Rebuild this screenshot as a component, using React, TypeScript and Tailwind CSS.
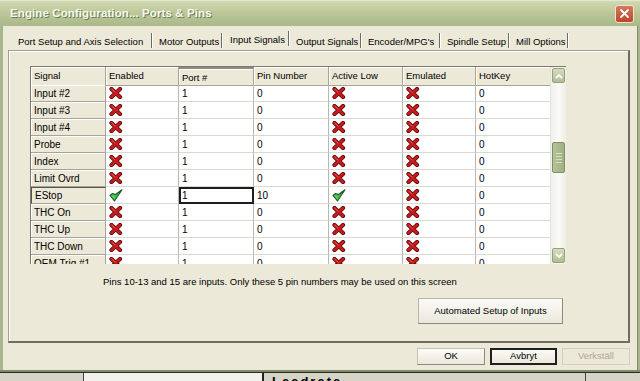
import React from "react";

type Mark = "x" | "c";
type Row = [string, Mark, string, string, Mark, Mark, string];

const ROWS: Row[] = [
  ["Input #2", "x", "1", "0", "x", "x", "0"],
  ["Input #3", "x", "1", "0", "x", "x", "0"],
  ["Input #4", "x", "1", "0", "x", "x", "0"],
  ["Probe", "x", "1", "0", "x", "x", "0"],
  ["Index", "x", "1", "0", "x", "x", "0"],
  ["Limit Ovrd", "x", "1", "0", "x", "x", "0"],
  ["EStop", "c", "1", "10", "c", "x", "0"],
  ["THC On", "x", "1", "0", "x", "x", "0"],
  ["THC Up", "x", "1", "0", "x", "x", "0"],
  ["THC Down", "x", "1", "0", "x", "x", "0"],
  ["OEM Trig #1", "x", "1", "0", "x", "x", "0"],
];

function XIcon() {
  return (
    <svg width="14" height="12" viewBox="0 0 14 12" className="block">
      <path d="M2.5 2 L11 10 M11 2 L2.5 10" stroke="#5e0a0a" strokeWidth="4.2" strokeLinecap="round" fill="none" />
      <path d="M2.5 2 L11 10 M11 2 L2.5 10" stroke="#c41c1c" strokeWidth="2.6" strokeLinecap="round" fill="none" />
      <path d="M3 2.3 L6 5" stroke="#ea6060" strokeWidth="0.9" strokeLinecap="round" fill="none" />
    </svg>
  );
}

function CheckIcon() {
  return (
    <svg width="14" height="13" viewBox="0 0 14 13" className="block">
      <path d="M1 6.5 L5.5 12 L13 0.8 L6.5 5.5 L3.5 4.5 Z" fill="#45b84f" stroke="#1a5a20" strokeWidth="1.1" strokeLinejoin="round" />
      <path d="M3 6.3 L5.6 9.5" stroke="#9ee3a3" strokeWidth="0.8" fill="none" />
    </svg>
  );
}

function MarkCell({ m }: { m: Mark }) {
  return m === "x" ? <XIcon /> : <CheckIcon />;
}

const TABS: { label: string; w: string; sel?: boolean }[] = [
  { label: "Port Setup and Axis Selection", w: "w-[141px]" },
  { label: "Motor Outputs", w: "w-[70px]" },
  { label: "Input Signals", w: "w-[67px]", sel: true },
  { label: "Output Signals", w: "w-[72px]" },
  { label: "Encoder/MPG's", w: "w-[79px]" },
  { label: "Spindle Setup", w: "w-[69px]" },
  { label: "Mill Options", w: "w-[59px]" },
];

const HEADERS = ["Signal", "Enabled", "Port #", "Pin Number", "Active Low", "Emulated", "HotKey"];

export default function App() {
  return (
    <div className="w-[640px] h-[381px] overflow-hidden flex flex-col bg-[#ece9d8] font-['Liberation_Sans',Arial,sans-serif] text-black">
      {/* Title bar */}
      <div className="h-[26px] shrink-0 flex items-center justify-between pl-[10px] pr-[6px] bg-gradient-to-b from-[#d0d9b1] via-[#bac697] to-[#aab88a] border-t border-[#e3e9cc]">
        <span className="text-[11.5px] font-bold text-[#f7f9ee] [text-shadow:1px_1px_0_#6e7a52] tracking-[0.1px]">
          Engine Configuration... Ports &amp; Pins
        </span>
        <div className="w-[19px] h-[18px] rounded-[3px] border border-[#f3e2d4] bg-gradient-to-b from-[#d8785a] to-[#b8462c] flex items-center justify-center">
          <svg width="11" height="11" viewBox="0 0 11 11">
            <path d="M2 2 L9 9 M9 2 L2 9" stroke="#fff" strokeWidth="1.8" strokeLinecap="round" />
          </svg>
        </div>
      </div>

      {/* Body */}
      <div className="flex-1 flex min-h-0">
        <div className="w-[3px] bg-[#a8b68d]" />
        <div className="flex-1 flex flex-col pl-[5px] pr-[7px]">
          {/* Tabs */}
          <div className="h-[24px] flex items-end pl-[4px] text-[9.5px]">
            {TABS.map((t) => (
              <div
                key={t.label}
                className={`${t.w} h-[17px] flex items-end justify-between ${t.sel ? "pb-[5px] pl-[7px]" : "pb-[3px] pl-[6px]"}`}
              >
                <span className="leading-[11px] whitespace-nowrap">{t.label}</span>
                <span className="w-[2px] h-[15px] border-l border-[#6d6c64] border-r border-r-white self-end mb-[-1px]" />
              </div>
            ))}
          </div>

          {/* Tab panel */}
          <div className="h-[293px] border border-[#a19f92] border-r-2 border-r-[#6f6d62] border-b-2 border-b-[#6f6d62] shadow-[inset_1px_1px_0_#ffffff] flex flex-col pl-[21px] pt-[15px]">
            {/* Grid */}
            <div className="flex w-[536px] h-[198px] border-l border-t border-[#7b7a72] bg-white">
              <div className="w-[519px] overflow-hidden text-[10px]">
                <div className="grid grid-cols-[75px_73px_75px_75px_74px_73px_75px] h-[18px]">
                  {HEADERS.map((h, i) => (
                    <div
                      key={h}
                      className={`bg-[#ece9d8] border-r border-b border-[#a6a497] pl-[3px] flex items-center text-[9.5px] shadow-[inset_1px_1px_0_#fff] ${
                        i === 2 ? "border-t-2 border-t-[#8e8c80] pt-[2px]" : ""
                      }`}
                    >
                      {h}
                    </div>
                  ))}
                </div>
                {ROWS.map((r, ri) => {
                  const estop = r[0] === "EStop";
                  return (
                    <div key={ri} className="grid grid-cols-[75px_73px_75px_75px_74px_73px_75px] h-[17px]">
                      <div
                        className={`bg-[#ece9d8] border-r border-b border-[#a6a497] pl-[3px] flex items-center ${
                          estop ? "border-l border-t border-l-[#55544e] border-t-[#55544e] pl-[2px]" : "shadow-[inset_1px_1px_0_#fff]"
                        }`}
                      >
                        {r[0]}
                      </div>
                      <div className="border-r border-b border-r-[#b9b8b0] border-b-[#d9d8d2] pl-[3px] flex items-center">
                        <MarkCell m={r[1]} />
                      </div>
                      <div
                        className={`border-r border-b border-r-[#b9b8b0] border-b-[#d9d8d2] pl-[3px] flex items-center ${
                          estop ? "outline-2 outline-[#1e1e1e] -outline-offset-2" : ""
                        }`}
                      >
                        {r[2]}
                      </div>
                      <div className="border-r border-b border-r-[#b9b8b0] border-b-[#d9d8d2] pl-[3px] flex items-center">
                        {r[3]}
                      </div>
                      <div className="border-r border-b border-r-[#b9b8b0] border-b-[#d9d8d2] pl-[3px] flex items-center">
                        <MarkCell m={r[4]} />
                      </div>
                      <div className="border-r border-b border-r-[#b9b8b0] border-b-[#d9d8d2] pl-[3px] flex items-center">
                        <MarkCell m={r[5]} />
                      </div>
                      <div className="border-r border-b border-r-[#b9b8b0] border-b-[#d9d8d2] pl-[3px] flex items-center">
                        {r[6]}
                      </div>
                    </div>
                  );
                })}
              </div>
              {/* Scrollbar */}
              <div className="w-[16px] flex flex-col bg-gradient-to-r from-[#f1f0ea] via-[#fbfbf8] to-[#eeede6] border-l border-[#e4e3dc]">
                <div className="h-[15px] mx-[1px] mt-[1px] rounded-[2px] border border-[#93a27a] bg-gradient-to-b from-[#d4ddbd] to-[#b1be94] flex items-center justify-center">
                  <svg width="8" height="6" viewBox="0 0 8 6">
                    <path d="M1 5 L4 2 L7 5" stroke="#ffffff" strokeWidth="1.8" fill="none" />
                  </svg>
                </div>
                <div className="h-[59px]" />
                <div className="h-[31px] mx-[1px] rounded-[2px] border border-[#7f8f64] bg-gradient-to-r from-[#b6c49a] to-[#9fb082] flex flex-col items-center justify-center gap-[2px]">
                  <div className="w-[6px] h-px bg-[#d8e0c6]" />
                  <div className="w-[6px] h-px bg-[#d8e0c6]" />
                  <div className="w-[6px] h-px bg-[#d8e0c6]" />
                  <div className="w-[6px] h-px bg-[#d8e0c6]" />
                </div>
                <div className="flex-1" />
                <div className="h-[15px] mx-[1px] mb-[1px] rounded-[2px] border border-[#93a27a] bg-gradient-to-b from-[#d4ddbd] to-[#b1be94] flex items-center justify-center">
                  <svg width="8" height="6" viewBox="0 0 8 6">
                    <path d="M1 1 L4 4 L7 1" stroke="#ffffff" strokeWidth="1.8" fill="none" />
                  </svg>
                </div>
              </div>
            </div>

            <div className="mt-[12px] ml-[73px] h-[11px] leading-[11px] text-[9.5px] whitespace-nowrap">
              Pins 10-13 and 15 are inputs. Only these 5 pin numbers may be used on this screen
            </div>

            <div className="mt-[11px] ml-[388px] w-[145px] h-[26px] flex items-center justify-center text-[9.5px] bg-gradient-to-b from-[#fbfbf7] to-[#ebe8dc] border border-[#b7b5a8] border-r-[#8c8a7e] border-b-[#8c8a7e]">
              Automated Setup of Inputs
            </div>
          </div>

          {/* Dialog buttons */}
          <div className="mt-[5px] h-[17px] flex justify-end gap-[4px] text-[9.5px]">
            <div className="w-[68px] h-full flex items-center justify-center bg-gradient-to-b from-[#fbfbf7] to-[#ebe8dc] border border-[#c4c2b6] border-r-[#8c8a7e] border-b-[#8c8a7e]">
              OK
            </div>
            <div className="w-[67px] h-full flex items-center justify-center bg-gradient-to-b from-[#fbfbf7] to-[#ebe8dc] border-2 border-[#1f1f1f] ml-[1px]">
              Avbryt
            </div>
            <div className="w-[68px] h-full flex items-center justify-center bg-[#ece9d8] border border-[#d0cec2] text-[#aca899] ml-[1px]">
              Verkställ
            </div>
          </div>
        </div>
        <div className="w-[3px] bg-[#a8b68d] border-l border-[#7f8c68]" />
      </div>
      <div className="h-[2px] shrink-0 bg-[#7f8c68]" />

      {/* Background app strip */}
      <div className="h-[9px] shrink-0 flex bg-[#d6d3c7] border-t border-[#2a2a2a] overflow-hidden">
        <div className="w-[84px] border-r border-[#444]" />
        <div className="w-[180px] border-r-2 border-[#222] bg-[#f2f1ec]" />
        <div className="flex-1 pl-[8px] text-[13px] font-bold leading-[13px] pt-[2px] tracking-[2px]">Leadrate</div>
        <div className="w-[55px] border-l border-[#444]" />
      </div>
    </div>
  );
}
